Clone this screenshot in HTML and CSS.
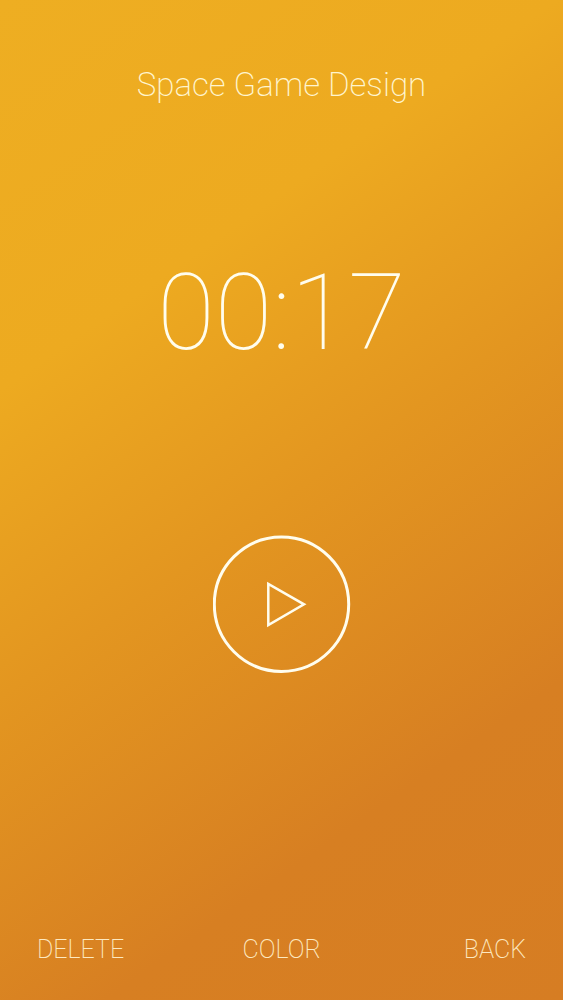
FILE: index.html
```html
<!DOCTYPE html>
<html lang="en">
<head>
  <meta charset="UTF-8">
  <meta name="viewport" content="width=device-width, initial-scale=1">
  <title>Space Game Design</title>
  <link rel="stylesheet" href="styles.css">
</head>
<body>
  <h1>Space Game Design</h1>

  <main>
    <div class="time">00:17</div>
    <button class="play" aria-label="Play">
      <svg viewBox="0 0 138 138">
        <circle cx="68.5" cy="69.2" r="67.2" />
        <path class="triangle" d="M55.3 49V90L91 69.3Z" />
      </svg>
    </button>
  </main>

  <footer>
    <button>DELETE</button>
    <button>COLOR</button>
    <button>BACK</button>
  </footer>
</body>
</html>
```
FILE: styles.css
```css
* {
  box-sizing: border-box;
}
body {
  display: flex;
  flex-direction: column;
  min-height: 100vh;
  margin: 0;
  padding: 65px 37px 30px;
  font-family: Roboto, sans-serif;
  font-weight: 200;
  color: #fffdee;
  background: linear-gradient(145deg, #eeae22 0%, #edaa20 28%, #e39620 50%, #d77f22 77%, #d67d23 100%);
}
h1 {
  margin: 0;
  font-size: 33px;
  font-weight: 200;
  line-height: 40px;
  text-align: center;
  color: #fff5cf;
}
main {
  display: flex;
  flex-direction: column;
  align-items: center;
  margin-top: 145px;
}
.time {
  font-size: 105px;
  font-weight: 100;
  line-height: 128px;
}
button {
  padding: 0;
  border: none;
  background: none;
  font: inherit;
  color: inherit;
  cursor: pointer;
}
.play {
  width: 138px;
  height: 138px;
  margin-top: 157px;
}
.play svg {
  display: block;
  fill: none;
  stroke: #fffdee;
  stroke-width: 3;
}
.play .triangle {
  stroke-width: 2.5;
}
footer {
  display: grid;
  grid-template-columns: 1fr 1fr 1fr;
  margin-top: auto;
  font-size: 25px;
  line-height: 40px;
  color: #fde9c0;
}
footer button:first-child {
  text-align: left;
}
footer button:last-child {
  text-align: right;
}
```
